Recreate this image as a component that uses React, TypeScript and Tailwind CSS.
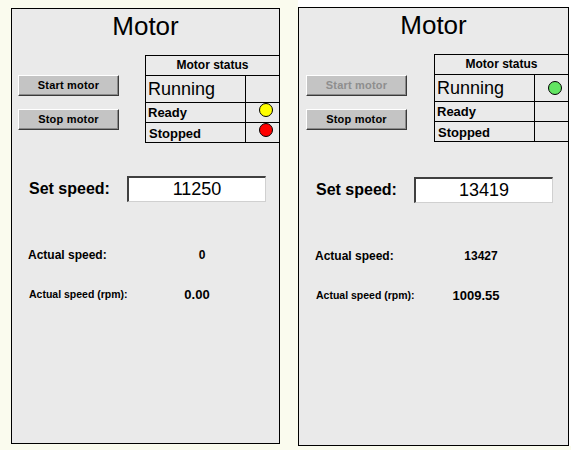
import React from "react";

type PanelProps = {
  setSpeed: string;
  actual: string;
  rpm: string;
  running: boolean;
  panelCls: string;
  btnPad: string;
  setRowMt: string;
  actualW: string;
  rpmW: string;
};

function Button({ label, disabled }: { label: string; disabled?: boolean }) {
  return (
    <div
      className={
        "w-[101px] h-[21px] flex items-center justify-center bg-[#c4c4c4] border border-t-white border-l-white border-b-[#3a3a3a] border-r-[#3a3a3a] shadow-[inset_-1px_-1px_#8a8a8a] text-[11px] font-bold tracking-[0.2px] " +
        (disabled ? "text-[#8e8e8e]" : "text-black")
      }
    >
      {label}
    </div>
  );
}

function Dot({ color }: { color: string }) {
  return <div className={"w-[14px] h-[14px] rounded-full border border-black " + color} />;
}

function MotorPanel(p: PanelProps) {
  return (
    <div className={"h-full bg-[#eaeaea] border border-black flex flex-col " + p.panelCls}>
      {/* Title */}
      <div className="pt-[2px] h-[32px] leading-[30px] text-[26px] text-center">Motor</div>

      {/* Buttons + status table */}
      <div className="mt-[14px] flex">
        <div className={"flex flex-col gap-[13px] " + p.btnPad}>
          <Button label="Start motor" disabled={p.running} />
          <Button label="Stop motor" />
        </div>
        <div className="ml-auto w-[134px] border-t border-l border-black">
          <div className="h-[20px] border-b border-black text-[12px] font-bold text-center leading-[19px]">
            Motor status
          </div>
          <div className="h-[27px] border-b border-black flex">
            <div className="w-[100px] border-r border-black pl-[2px] text-[18px] leading-[26px]">Running</div>
            <div className="flex-1 flex items-center pl-[13px]">
              {p.running && <Dot color="bg-[#62e562]" />}
            </div>
          </div>
          <div className="h-[20px] border-b border-black flex">
            <div className="w-[100px] border-r border-black pl-[2px] text-[13px] font-bold leading-[20px]">Ready</div>
            <div className="flex-1 pl-[13px]">{!p.running && <Dot color="bg-[#ffff00]" />}</div>
          </div>
          <div className="h-[20px] border-b border-black flex">
            <div className="w-[100px] border-r border-black pl-[3px] text-[13px] font-bold leading-[21px]">Stopped</div>
            <div className="flex-1 pl-[13px]">{!p.running && <Dot color="bg-[#ff0000]" />}</div>
          </div>
        </div>
      </div>

      {/* Set speed */}
      <div className={"flex items-center " + p.setRowMt}>
        <div className="w-[115px] pl-[17px] text-[16px] font-bold">Set speed:</div>
        <div className="w-[139px] h-[26px] bg-white border-t-2 border-l-2 border-t-[#404040] border-l-[#404040] border-b border-r border-b-[#d0d0d0] border-r-[#d0d0d0] text-[18px] leading-[22px] text-center">
          {p.setSpeed}
        </div>
      </div>

      {/* Actual speed */}
      <div className="mt-[45px] flex items-center h-[16px]">
        <div className={"pl-[16px] text-[12px] font-bold " + p.actualW}>Actual speed:</div>
        <div className="w-[60px] text-center text-[12px] font-bold">{p.actual}</div>
      </div>
      <div className="mt-[24px] flex items-center h-[16px]">
        <div className={"pl-[17px] text-[10.5px] font-bold " + p.rpmW}>Actual speed (rpm):</div>
        <div className="w-[60px] text-center text-[13px] font-bold">{p.rpm}</div>
      </div>
    </div>
  );
}

export default function App() {
  return (
    <div className="w-[571px] h-[450px] bg-[#fafbee] flex items-start font-['Liberation_Sans',Arial,sans-serif] text-black">
      <div className="pl-[11px] pt-[8px] h-[444px]">
        <div className="w-[269px] h-full">
          <MotorPanel
            setSpeed="11250"
            actual="0"
            rpm="0.00"
            running={false}
            panelCls=""
            btnPad="pl-[6px] pt-[20px]"
            setRowMt="mt-[33px]"
            actualW="w-[160px]"
            rpmW="w-[155px]"
          />
        </div>
      </div>
      <div className="ml-[18px] bg-white pt-[7px] pr-[3px] h-[446px]">
        <div className="w-[271px] h-full">
          <MotorPanel
            setSpeed="13419"
            actual="13427"
            rpm="1009.55"
            running={true}
            panelCls=""
            btnPad="pl-[7px] pt-[21px]"
            setRowMt="mt-[35px]"
            actualW="w-[152px]"
            rpmW="w-[147px]"
          />
        </div>
      </div>
    </div>
  );
}
